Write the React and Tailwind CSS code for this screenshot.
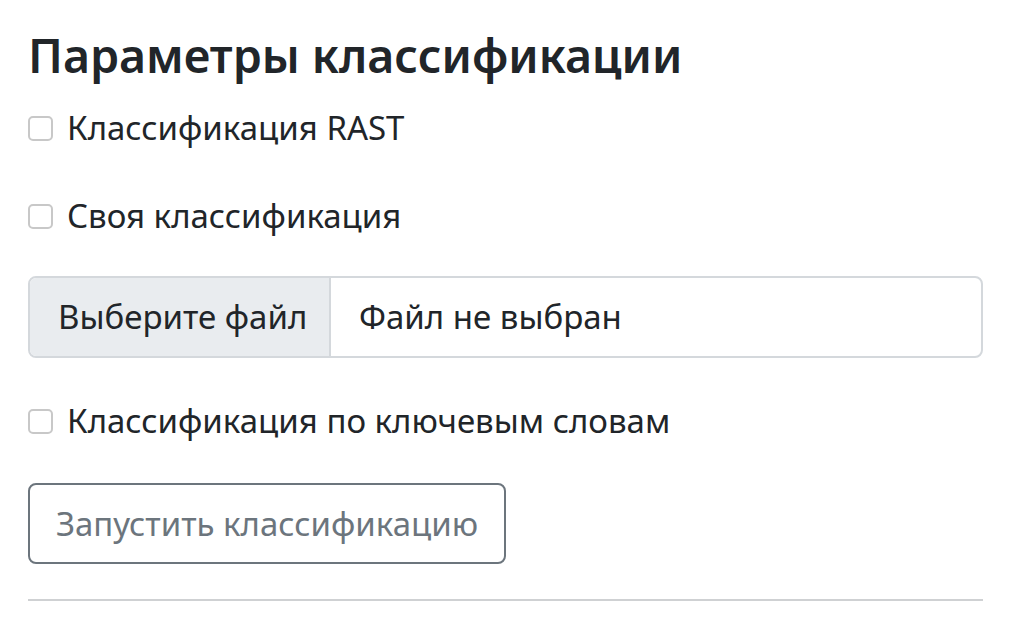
import React from 'react';

function Box() {
    return <span className="inline-block w-[25px] h-[25px] shrink-0 rounded-[5px] border-2 border-[#c8c8c8] bg-white"></span>
}

function CheckRow({label, className}) {
    return <label className={"flex items-center gap-[14px] h-[48px] whitespace-nowrap " + className}>
        <Box />
        <span>{label}</span>
    </label>
}

export default function App() {
    return <div className="w-[1016px] h-[626px] bg-white text-[#212529] font-['Noto_Sans',sans-serif] text-[33px] px-[28px] overflow-hidden">
        <h3 className="text-[46.5px] font-semibold leading-[52px] mt-[29px] whitespace-nowrap">Параметры классификации</h3>

        <CheckRow className="mt-[23px]" label="Классификация RAST" />
        <CheckRow className="mt-[40px]" label="Своя классификация" />

        {/* file input */}
        <div className="mt-[36px] flex h-[82px] w-[955px] rounded-[8px] border-2 border-[#d4d8dc] overflow-hidden whitespace-nowrap">
            <div className="flex items-center shrink-0 bg-[#e9ecef] border-r-2 border-[#d4d8dc] pl-[28px] w-[301px]">Выберите файл</div>
            <div className="flex items-center pl-[28px]">Файл не выбран</div>
        </div>

        <CheckRow className="mt-[39px]" label="Классификация по ключевым словам" />

        <button className="mt-[38px] h-[81px] w-[478px] rounded-[8px] border-2 border-[#6c757d] text-[#6c757d] flex items-center justify-center whitespace-nowrap">Запустить классификацию</button>

        <hr className="mt-[35px] w-[955px] border-t-2 border-[#cfd1d3]" />
    </div>
}
